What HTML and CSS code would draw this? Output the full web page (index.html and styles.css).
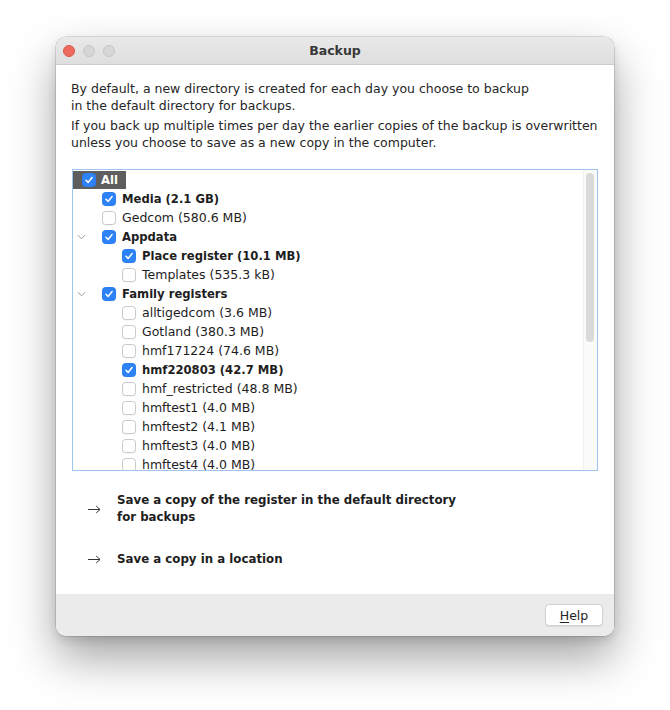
FILE: index.html
```html
<!DOCTYPE html>
<html>
<head>
<meta charset="utf-8">
<title>Backup</title>
<link rel="stylesheet" href="styles.css">
</head>
<body>
<div class="stage">
  <div class="window">
    <div class="titlebar">
      <div class="lights">
        <span class="light red"></span>
        <span class="light gray"></span>
        <span class="light gray"></span>
      </div>
      <div class="title">Backup</div>
    </div>
    <div class="content">
      <p class="intro">By default, a new directory is created for each day you choose to backup<br>in the default directory for backups.</p>
      <p class="intro">If you back up multiple times per day the earlier copies of the backup is overwritten<br>unless you choose to save as a new copy in the computer.</p>
      <div class="tree">
        <div class="rows">
          <div class="row lvl0">
            <span class="sel"><span class="cb on"><svg viewBox="0 0 14 14"><polyline points="3.5,7.3 6,9.8 10.6,4.2"/></svg></span><span class="lbl b">All</span></span>
          </div>
          <div class="row lvl1"><span class="twisty"></span><span class="cb on"><svg viewBox="0 0 14 14"><polyline points="3.5,7.3 6,9.8 10.6,4.2"/></svg></span><span class="lbl b">Media (2.1 GB)</span></div>
          <div class="row lvl1"><span class="twisty"></span><span class="cb"></span><span class="lbl">Gedcom (580.6 MB)</span></div>
          <div class="row lvl1"><span class="twisty"><svg viewBox="0 0 10 6"><polyline points="1,1 5,5 9,1"/></svg></span><span class="cb on"><svg viewBox="0 0 14 14"><polyline points="3.5,7.3 6,9.8 10.6,4.2"/></svg></span><span class="lbl b">Appdata</span></div>
          <div class="row lvl2"><span class="twisty"></span><span class="cb on"><svg viewBox="0 0 14 14"><polyline points="3.5,7.3 6,9.8 10.6,4.2"/></svg></span><span class="lbl b">Place register (10.1 MB)</span></div>
          <div class="row lvl2"><span class="twisty"></span><span class="cb"></span><span class="lbl">Templates (535.3 kB)</span></div>
          <div class="row lvl1"><span class="twisty"><svg viewBox="0 0 10 6"><polyline points="1,1 5,5 9,1"/></svg></span><span class="cb on"><svg viewBox="0 0 14 14"><polyline points="3.5,7.3 6,9.8 10.6,4.2"/></svg></span><span class="lbl b">Family registers</span></div>
          <div class="row lvl2"><span class="twisty"></span><span class="cb"></span><span class="lbl">alltigedcom (3.6 MB)</span></div>
          <div class="row lvl2"><span class="twisty"></span><span class="cb"></span><span class="lbl">Gotland (380.3 MB)</span></div>
          <div class="row lvl2"><span class="twisty"></span><span class="cb"></span><span class="lbl">hmf171224 (74.6 MB)</span></div>
          <div class="row lvl2"><span class="twisty"></span><span class="cb on"><svg viewBox="0 0 14 14"><polyline points="3.5,7.3 6,9.8 10.6,4.2"/></svg></span><span class="lbl b">hmf220803 (42.7 MB)</span></div>
          <div class="row lvl2"><span class="twisty"></span><span class="cb"></span><span class="lbl">hmf_restricted (48.8 MB)</span></div>
          <div class="row lvl2"><span class="twisty"></span><span class="cb"></span><span class="lbl">hmftest1 (4.0 MB)</span></div>
          <div class="row lvl2"><span class="twisty"></span><span class="cb"></span><span class="lbl">hmftest2 (4.1 MB)</span></div>
          <div class="row lvl2"><span class="twisty"></span><span class="cb"></span><span class="lbl">hmftest3 (4.0 MB)</span></div>
          <div class="row lvl2"><span class="twisty"></span><span class="cb"></span><span class="lbl">hmftest4 (4.0 MB)</span></div>
        </div>
        <div class="scrollbar"><div class="thumb"></div></div>
      </div>
      <div class="actions">
        <div class="action">
          <span class="arrow"><svg viewBox="0 0 13 9"><path d="M0 4.5H12M8.2 1L12 4.5L8.2 8"/></svg></span>
          <span class="alabel">Save a copy of the register in the default directory<br>for backups</span>
        </div>
        <div class="action">
          <span class="arrow"><svg viewBox="0 0 13 9"><path d="M0 4.5H12M8.2 1L12 4.5L8.2 8"/></svg></span>
          <span class="alabel">Save a copy in a location</span>
        </div>
      </div>
    </div>
    <div class="footer">
      <button class="help"><span class="mn">H</span>elp</button>
    </div>
  </div>
</div>
</body>
</html>
```

FILE: styles.css
```css
html, body {
  margin: 0;
  padding: 0;
  background: #ffffff;
}
body {
  font-family: "DejaVu Sans", "Liberation Sans", sans-serif;
  color: #222222;
}
.stage {
  width: 670px;
  height: 710px;
  padding: 37px 0 0 56px;
  box-sizing: border-box;
}
.window {
  width: 558px;
  height: 599px;
  border-radius: 10px;
  overflow: hidden;
  background: #ffffff;
  display: flex;
  flex-direction: column;
  box-shadow: 0 0 0 0.5px rgba(0,0,0,0.22), 0 22px 46px rgba(0,0,0,0.36), 0 4px 10px rgba(0,0,0,0.12);
}
.titlebar {
  height: 28px;
  flex: none;
  box-sizing: border-box;
  background: linear-gradient(#e9e9e9, #dedede);
  border-bottom: 1px solid #cccccc;
  display: flex;
  align-items: center;
  position: relative;
}
.lights {
  display: flex;
  gap: 8px;
  padding-left: 7px;
}
.light {
  width: 12px;
  height: 12px;
  border-radius: 50%;
  box-sizing: border-box;
}
.light.red {
  background: #ed6a5e;
  border: 0.5px solid #d9574b;
}
.light.gray {
  background: #d6d6d6;
  border: 0.5px solid #c5c5c5;
}
.title {
  position: absolute;
  left: 0;
  right: 0;
  top: 0;
  bottom: 0;
  display: flex;
  align-items: center;
  justify-content: center;
  font-weight: bold;
  font-size: 12.5px;
  color: #383838;
  pointer-events: none;
}
.content {
  flex: 1;
  padding: 15px 16px 0 15px;
}
.intro {
  margin: 0 0 3px 0;
  font-size: 12.5px;
  line-height: 17px;
  color: #262626;
  white-space: nowrap;
}
.tree {
  margin: 18px 0 0 1px;
  height: 302px;
  box-sizing: border-box;
  border: 1px solid #9fc4ee;
  display: flex;
  overflow: hidden;
}
.rows {
  flex: 1;
  overflow: hidden;
}
.row {
  height: 19px;
  display: flex;
  align-items: center;
  font-size: 12.5px;
  color: #1e1e1e;
  white-space: nowrap;
}
.row.lvl2 {
  padding-left: 20px;
}
.sel {
  display: flex;
  align-items: center;
  height: 18px;
  background: #5e5e5e;
  padding: 0 8px 0 9px;
  color: #ffffff;
}
.sel .lbl {
  margin-left: 5px;
}
.twisty {
  width: 16px;
  margin-right: 13px;
  flex: none;
  display: flex;
  align-items: center;
  justify-content: center;
}
.twisty svg {
  width: 9px;
  height: 6px;
  fill: none;
  stroke: #8a8a8a;
  stroke-width: 1;
}
.cb {
  width: 14px;
  height: 14px;
  box-sizing: border-box;
  border-radius: 3.5px;
  border: 1px solid #c9c9c9;
  background: #ffffff;
  box-shadow: 0 0.5px 0.5px rgba(0,0,0,0.06);
  flex: none;
  display: flex;
}
.cb.on {
  background: #2c82f6;
  border-color: #2a7ef0;
}
.cb svg {
  width: 12px;
  height: 12px;
  fill: none;
  stroke: #ffffff;
  stroke-width: 1.8;
  stroke-linecap: round;
  stroke-linejoin: round;
}
.lbl {
  margin-left: 6px;
}
.lbl.b {
  font-weight: bold;
  font-size: 11.6px;
}
.scrollbar {
  width: 14px;
  flex: none;
  background: #fafafa;
  border-left: 1px solid #f1f1f1;
  box-sizing: border-box;
  padding: 3px 0 0 2px;
}
.thumb {
  width: 8px;
  height: 169px;
  border-radius: 4px;
  background: #dadada;
}
.actions {
  padding: 21px 0 0 17px;
  display: flex;
  flex-direction: column;
  gap: 25px;
}
.action {
  display: flex;
  align-items: center;
}
.arrow {
  width: 29px;
  flex: none;
  display: flex;
  align-items: center;
}
.arrow svg {
  width: 13px;
  height: 9px;
  fill: none;
  stroke: #333333;
  stroke-width: 1;
}
.alabel {
  font-weight: bold;
  font-size: 11.8px;
  line-height: 17px;
  color: #1e1e1e;
  white-space: nowrap;
}
.footer {
  height: 42px;
  flex: none;
  background: #ecebeb;
  display: flex;
  justify-content: flex-end;
  align-items: flex-start;
  padding: 10px 11px 0 0;
  box-sizing: border-box;
}
.help {
  width: 58px;
  height: 22px;
  border: 1px solid #d2d2d2;
  border-radius: 4px;
  background: #ffffff;
  font-family: "DejaVu Sans", "Liberation Sans", sans-serif;
  font-size: 12.5px;
  color: #262626;
  padding: 0;
  box-shadow: 0 0.5px 1px rgba(0,0,0,0.08);
}
.mn {
  text-decoration: underline;
  text-underline-offset: 2px;
}
```
